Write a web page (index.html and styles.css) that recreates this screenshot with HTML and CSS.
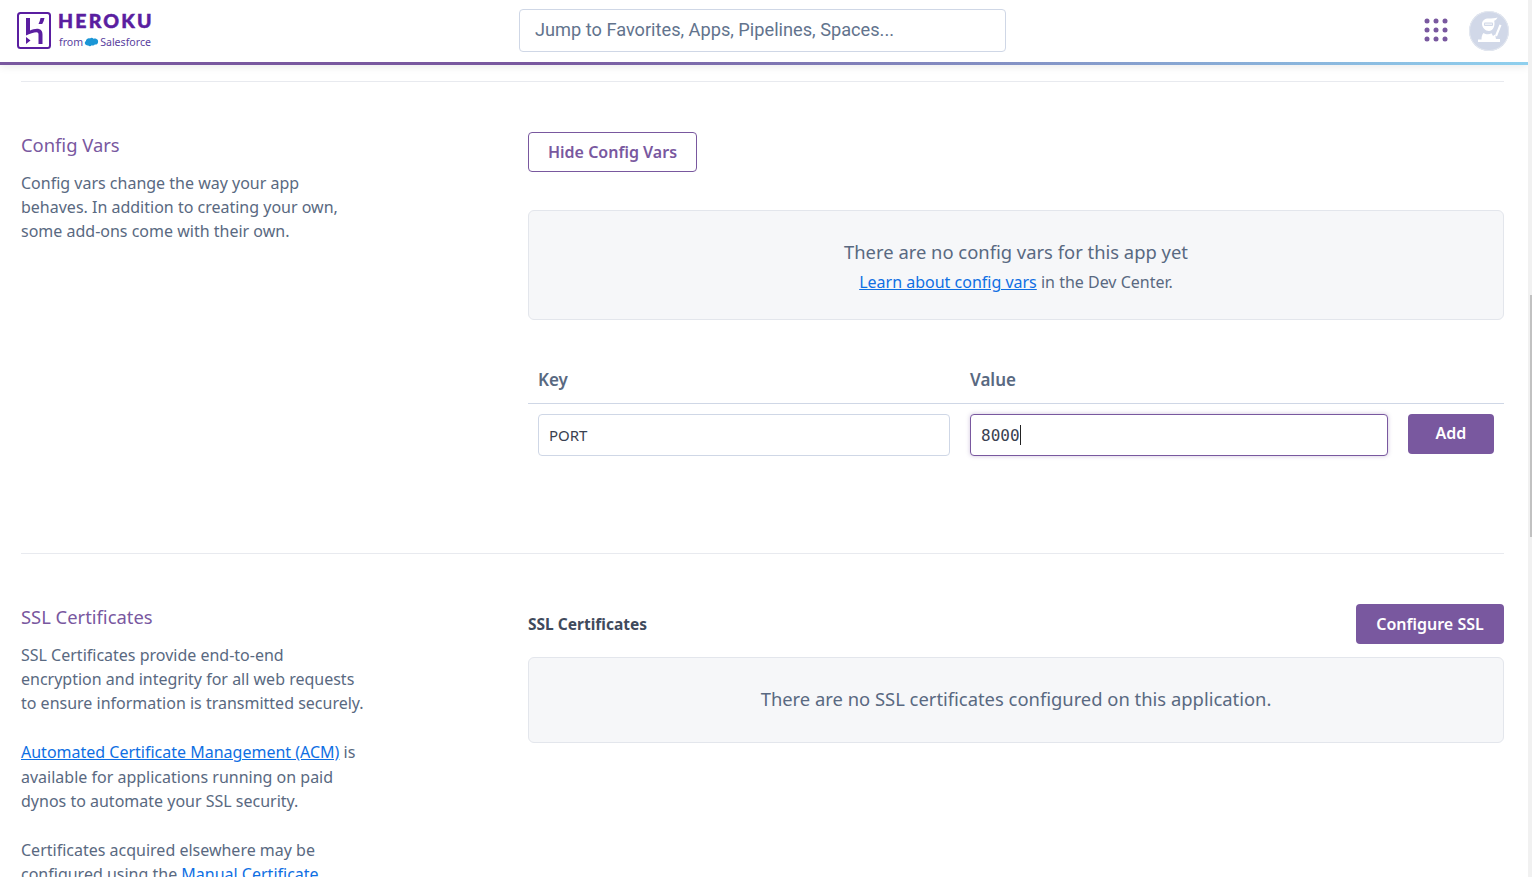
FILE: index.html
```html
<!DOCTYPE html>
<html lang="en">
<head>
<meta charset="utf-8">
<title>Heroku Settings</title>
<link rel="stylesheet" href="styles.css">
</head>
<body>
<div class="viewport">
  <div class="page">
    <header class="topbar">
      <div class="topbar-row">
        <a class="brand">
          <svg class="brand-mark" width="35" height="38" viewBox="0 0 35 38" aria-hidden="true">
            <rect x="1" y="1" width="32" height="35" rx="2.500" fill="#fff" stroke="#5a1ea0" stroke-width="2"/>
            <path d="M9 6h4v12.500c3-1.300 6.500-2.300 9-1.500 2.500.8 3.500 2.700 3.500 5.500V32h-4v-9.500c0-1.500-.7-2.200-2-2.200-2.500 0-7 1.700-10.500 3.300z" fill="#5a1ea0"/>
            <path d="M21.500 12c1-2 1.700-4 2-6h4c-.4 2.200-1.200 4.200-2.300 6z" fill="#5a1ea0"/>
            <path d="M9 25v7l4.500-3.500z" fill="#5a1ea0"/>
          </svg>
          <span class="brand-text">
            <span class="brand-name">HEROKU</span>
            <span class="brand-sub">from
              <svg class="cloud" width="15" height="11" viewBox="0 0 15 11" aria-hidden="true"><path d="M6 1.500c.8-.8 2.600-1 3.400.2 1-.5 3-.4 4 .9 1 1.200 1 3.400-.2 4.300-.8.700-1.800.8-2.500.6-.5 1-2 1.300-3 .8-.8 1.200-2.700 1.200-3.400.1C3.500 8.700 1.500 8.300 1 6.800.6 5.600 1 4.400 2 4c-.4-1.500 2.300-3.500 4-2.500z" fill="#1b96d6"/></svg>Salesforce</span>
          </span>
        </a>
        <div class="search"><input class="search-input" type="text" placeholder="Jump to Favorites, Apps, Pipelines, Spaces..."></div>
        <div class="top-actions">
          <svg class="apps" width="24" height="24" viewBox="0 0 24 24" aria-hidden="true" fill="#79589f">
            <circle cx="3" cy="3" r="2.500"/><circle cx="12" cy="3" r="2.500"/><circle cx="21" cy="3" r="2.500"/>
            <circle cx="3" cy="12" r="2.500"/><circle cx="12" cy="12" r="2.500"/><circle cx="21" cy="12" r="2.500"/>
            <circle cx="3" cy="21" r="2.500"/><circle cx="12" cy="21" r="2.500"/><circle cx="21" cy="21" r="2.500"/>
          </svg>
          <svg class="avatar" width="40" height="40" viewBox="0 0 40 40" aria-hidden="true">
            <circle cx="20" cy="20" r="20" fill="#d1d8e8"/>
            <circle cx="20" cy="20" r="19.500" fill="none" stroke="#e4e8f0"/>
            <path d="M13 13c0-3.500 3-5.500 6.500-5.500 3 0 6.500-.3 9-1-.5 1.500-1.800 2.700-3.300 3.300.5 2 .4 4.700-.3 6.200-1 2.500-3 4-5 4-3.500 0-6.900-3.500-6.900-7z" fill="#fff"/>
            <rect x="15" y="11.500" width="9" height="3.500" rx="1" fill="#d1d8e8"/>
            <rect x="16" y="12.500" width="7" height="1.500" fill="#eef1f6"/>
            <path d="M14.500 22c2 1.500 6 1.700 8 .3l1.500 2.700 2.200-1.500c.4 2 .4 3.300.8 4.500H31V31H9v-2.500h3.500c0-2.500.5-5 2-6.500z" fill="#fff"/>
            <path d="M26 24.500 30.500 13.500l2 .8L28 25.500z" fill="#fff"/>
          </svg>
        </div>
      </div>
      <div class="topbar-line"></div>
    </header>

    <main class="content">
      <section class="section first">
        <div class="side">
          <h2 class="side-title">Config Vars</h2>
          <p class="side-text">Config vars change the way your app<br>behaves. In addition to creating your own,<br>some add-ons come with their own.</p>
        </div>
        <div class="body">
          <button class="btn btn-outline" type="button">Hide Config Vars</button>
          <div class="panel panel-config">
            <div class="panel-title">There are no config vars for this app yet</div>
            <div class="panel-note"><a class="link">Learn about config vars</a> in the Dev Center.</div>
          </div>
          <div class="vars-head">
            <div class="col-key">Key</div>
            <div class="col-value">Value</div>
          </div>
          <div class="vars-row">
            <div class="col-key"><input class="field" type="text" value="PORT"></div>
            <div class="col-value"><div class="field field-focus"><span class="mono">8000</span><span class="caret"></span></div></div>
            <button class="btn btn-solid btn-add" type="button">Add</button>
          </div>
        </div>
      </section>

      <section class="section">
        <div class="side">
          <h2 class="side-title">SSL Certificates</h2>
          <p class="side-text">SSL Certificates provide end-to-end<br>encryption and integrity for all web requests<br>to ensure information is transmitted securely.</p>
          <p class="side-text"><a class="link">Automated Certificate Management (ACM)</a> is<br>available for applications running on paid<br>dynos to automate your SSL security.</p>
          <p class="side-text">Certificates acquired elsewhere may be<br>configured using the <a class="link">Manual Certificate</a></p>
        </div>
        <div class="body">
          <div class="ssl-head">
            <strong class="ssl-label">SSL Certificates</strong>
            <button class="btn btn-solid btn-ssl" type="button">Configure SSL</button>
          </div>
          <div class="panel panel-ssl">
            <div class="panel-title">There are no SSL certificates configured on this application.</div>
          </div>
        </div>
      </section>
    </main>
  </div>
  <div class="scrollbar"><div class="thumb"></div></div>
</div>
</body>
</html>
```

FILE: styles.css
```css
* { box-sizing: border-box; }
html, body { margin: 0; padding: 0; height: 100%; overflow: hidden; background: #fff; }
body { font-family: "Noto Sans", "Open Sans", sans-serif; color: #596981; }

.viewport { display: flex; height: 877px; overflow: hidden; }
.page { flex: 1; min-width: 0; }

.scrollbar { width: 4px; background: #f1f1f1; display: flex; justify-content: flex-end; }
.thumb { width: 2px; height: 242px; margin-top: 295px; background: #c1c1c1; }

.topbar { height: 65px; background: #fff; box-shadow: 0 2px 8px rgba(0, 0, 0, .08); }
.topbar-row { height: 62px; display: flex; align-items: center; padding: 0 19px 0 16px; }
.topbar-line { height: 3px; background: linear-gradient(to right, #79589f 0%, #79589f 35%, #8fd0ee 100%); }

.brand { display: flex; align-items: center; gap: 7px; width: 503px; flex: none; }
.brand-mark { display: block; flex: none; margin-left: 1px; }
.brand-text { display: flex; flex-direction: column; margin-left: -1px; margin-top: -2px; }
.brand-name { font-family: "Lato", sans-serif; font-weight: 900; font-size: 19.500px; line-height: 20px; letter-spacing: 2.200px; color: #5a1ea0; -webkit-text-stroke: .5px #5a1ea0; }
.brand-sub { display: flex; align-items: center; gap: 1px; font-family: "Noto Sans", sans-serif; font-size: 10.600px; line-height: 14px; margin-top: 4px; margin-left: 1px; color: #5a3fa0; white-space: nowrap; }
.cloud { display: block; }

.search { width: 487px; flex: none; margin-bottom: 2px; }
.search-input { display: block; width: 100%; height: 43px; border: 1px solid #cfd7e6; border-radius: 4px; padding: 0 15px 1px; font-family: "Roboto", sans-serif; font-size: 18.200px; background: #fff; color: #62738d; outline: none; }
.search-input::placeholder { color: #62738d; opacity: 1; }

.top-actions { margin-left: auto; display: flex; align-items: center; gap: 21px; }
.apps { display: block; margin-bottom: 2px; margin-left: -1px; }
.avatar { display: block; }

.content { padding: 16px 24px 0 21px; }
.section { display: grid; grid-template-columns: 507px 1fr; border-top: 1px solid #e8eaef; padding-top: 50px; height: 472px; }
.section + .section { height: auto; }

.side-title { margin: 0; font-size: 18.400px; font-weight: 400; line-height: 26px; color: #79589f; }
.side-text { margin: 0 0 24.400px; font-size: 16px; line-height: 24.400px; color: #596981; }
.side-title + .side-text { margin-top: 12.600px; }

.body { min-width: 0; }
.btn { font-family: inherit; font-weight: 600; font-size: 16px; border-radius: 4px; cursor: pointer; display: block; }
.btn-outline { width: 169px; height: 40px; border: 1px solid #79589f; background: #fff; color: #79589f; }
.btn-solid { background: #79589f; border: 0; color: #fff; }
.btn-add { width: 86px; height: 40px; flex: none; margin-left: 20px; padding-bottom: 3px; }
.btn-ssl { width: 148px; height: 40px; }

.panel { border: 1px solid #e3e6ec; border-radius: 6px; background: #f6f7f9; text-align: center; }
.panel-config { height: 110px; margin-top: 38px; padding-top: 27px; }
.panel-ssl { height: 86px; padding-top: 27px; }
.panel-title { font-size: 18.400px; line-height: 28px; color: #596981; }
.panel-note { font-size: 16px; line-height: 24px; margin-top: 4px; }
.link { color: #0f6fe3; text-decoration: underline; }

.vars-head { display: flex; margin-top: 48px; height: 36px; border-bottom: 1px solid #cfd7e6; padding-left: 10px; font-size: 17px; font-weight: 600; color: #596981; line-height: 24px; }
.vars-row { display: flex; padding: 10px 10px 0 10px; align-items: flex-start; }
.col-key { width: 432px; flex: none; }
.col-value { width: 418px; flex: none; }
.vars-row .col-key { padding-right: 20px; }
.field { display: flex; align-items: center; width: 100%; height: 42px; border: 1px solid #cfd7e6; border-radius: 4px; padding: 0 10px; font-family: "Noto Sans", sans-serif; font-size: 15px; color: #3a4150; background: #fff; outline: none; }
.field-focus { border-color: #79589f; box-shadow: 0 0 4px rgba(121, 88, 159, .35); }
.mono { font-family: "DejaVu Sans Mono", monospace; font-size: 16px; }
.caret { width: 1px; height: 20px; background: #222; }

.ssl-head { display: flex; justify-content: space-between; align-items: center; height: 40px; margin-bottom: 13px; }
.ssl-label { font-size: 15.500px; font-weight: 700; color: #3f4a5c; }
```
